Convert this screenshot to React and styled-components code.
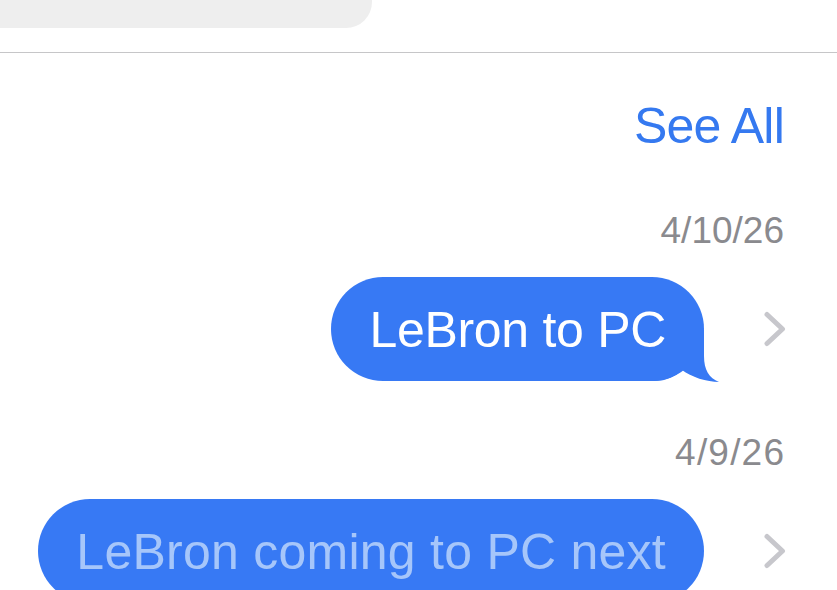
import React from "react";
import styled, { createGlobalStyle } from "styled-components";

const GlobalStyle = createGlobalStyle`
  html, body {
    margin: 0;
    padding: 0;
    background: #ffffff;
    overflow: hidden;
  }
  body {
    font-family: "Liberation Sans", Arial, Helvetica, sans-serif;
  }
`;

const Screen = styled.div`
  width: 837px;
  height: 590px;
  overflow: hidden;
  background: #ffffff;
  display: flex;
  flex-direction: column;
`;

const SearchField = styled.div`
  width: 372px;
  height: 28px;
  flex: none;
  background: #eeeeee;
  border-bottom-right-radius: 26px;
`;

const Divider = styled.div`
  height: 1px;
  flex: none;
  margin-top: 24px;
  background: #c6c6c8;
`;

const TextRow = styled.div`
  display: flex;
  justify-content: flex-end;
  padding-right: 53px;
  margin-top: ${(p) => p.$top}px;
  flex: none;
`;

const SeeAll = styled.span`
  font-size: 50px;
  line-height: 60px;
  letter-spacing: -0.8px;
  color: #3579f0;
`;

const DateLabel = styled.span`
  font-size: 37px;
  line-height: 44px;
  letter-spacing: ${(p) => p.$spacing || 0}px;
  margin-right: ${(p) => -(p.$spacing || 0)}px;
  color: #8a8a8e;
`;

const MessageRow = styled.div`
  display: flex;
  justify-content: flex-end;
  align-items: center;
  padding-right: 50px;
  margin-top: ${(p) => p.$top}px;
  flex: none;
`;

const Bubble = styled.div`
  position: relative;
  height: 104px;
  box-sizing: border-box;
  padding: 3px 38px 0;
  border-radius: 52px;
  background: #3779f4;
  font-size: 50px;
  line-height: 101px;
  letter-spacing: ${(p) => p.$spacing}px;
  white-space: nowrap;
  color: ${(p) => (p.$faded ? "#a6c6fa" : "#ffffff")};
`;

const BubbleText = styled.span`
  position: relative;
  z-index: 1;
`;

const Tail = styled.svg`
  position: absolute;
  z-index: 0;
  left: calc(100% - 55px);
  bottom: -1px;
  width: 72px;
  height: 52px;
  display: block;
`;

const ChevronCell = styled.div`
  width: 24px;
  height: 36px;
  margin-left: 59px;
  display: flex;
  align-items: center;
  justify-content: center;
`;

const Chevron = () => (
  <svg width="24" height="36" viewBox="0 0 24 36" fill="none">
    <path
      d="M4 3.5 L19.5 18 L4 32.5"
      stroke="#c7c7cc"
      strokeWidth="5"
      strokeLinecap="round"
      strokeLinejoin="round"
    />
  </svg>
);

const Message = ({ text, faded, tail, spacing }) => (
  <>
    <Bubble $faded={faded} $spacing={spacing}>
      {tail && (
        <Tail viewBox="0 0 72 52">
          <path
            d="M0 0 L55 0 L55 26 C55 40 60 48 70 52 C58 52 42 47 33 40 C27 46 18 51 5 51 L0 51 Z"
            fill="#3779f4"
          />
        </Tail>
      )}
      <BubbleText>{text}</BubbleText>
    </Bubble>
    <ChevronCell>
      <Chevron />
    </ChevronCell>
  </>
);

export default function App() {
  return (
    <>
      <GlobalStyle />
      <Screen>
        <SearchField />
        <Divider />
        <TextRow $top={43}>
          <SeeAll>See All</SeeAll>
        </TextRow>
        <TextRow $top={53}>
          <DateLabel>4/10/26</DateLabel>
        </TextRow>
        <MessageRow $top={24}>
          <Message text="LeBron to PC" tail spacing={-0.3} />
        </MessageRow>
        <TextRow $top={50}>
          <DateLabel $spacing={1.2}>4/9/26</DateLabel>
        </TextRow>
        <MessageRow $top={24}>
          <Message text="LeBron coming to PC next" faded spacing={0.25} />
        </MessageRow>
      </Screen>
    </>
  );
}
